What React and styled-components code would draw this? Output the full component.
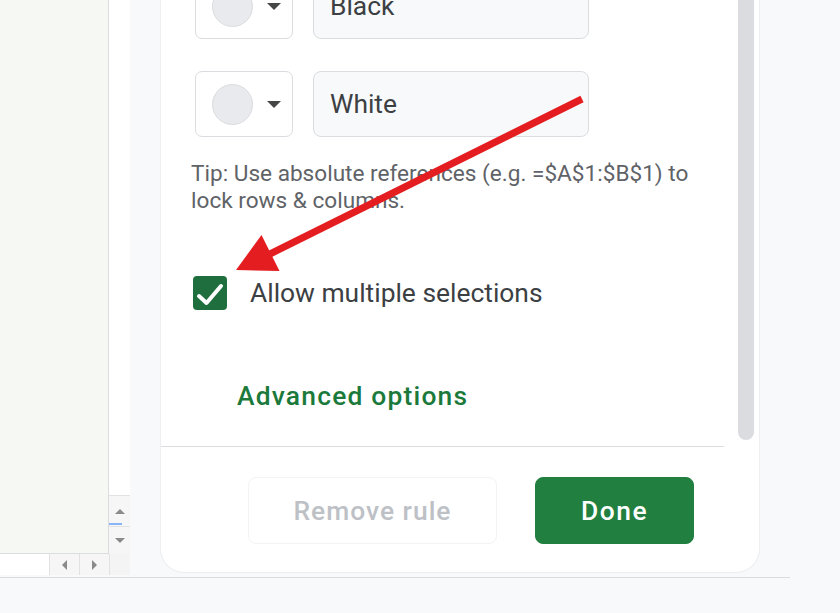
import React from 'react'
import styled, { createGlobalStyle } from 'styled-components'

// Global
const GlobalStyle = createGlobalStyle`
    html, body {
        margin: 0;
        padding: 0;
        overflow: hidden;
        background: #f8f9fa;
    }
    * {
        box-sizing: border-box;
    }
`

// Styled components
const Page = styled.div`
    position: relative;
    width: 840px;
    height: 613px;
    display: flex;
    flex-direction: column;
    background-color: #f8f9fa;
    font-family: Roboto, 'Noto Sans', Arial, sans-serif;
    overflow: hidden;
`
const Top = styled.div`
    height: 577px;
    display: flex;
    flex-direction: row;
`
const BottomLine = styled.div`
    width: 790px;
    height: 1px;
    background-color: #dadce0;
`

// Spreadsheet strip on the left
const Sheet = styled.div`
    width: 130px;
    display: flex;
    flex-direction: column;
`
const SheetBody = styled.div`
    height: 554px;
    display: flex;
    flex-direction: row;
`
const Grid = styled.div`
    width: 109px;
    background-color: #f6f8f4;
    border-right: 1px solid #dadce0;
    border-bottom: 1px solid #dadce0;
`
const VScroll = styled.div`
    flex: 1;
    display: flex;
    flex-direction: column;
    justify-content: flex-end;
    background-color: #ffffff;
`
const ScrollBtn = styled.div`
    position: relative;
    width: ${(props) => props.w || '100%'};
    height: ${(props) => props.h || '100%'};
    display: flex;
    align-items: center;
    justify-content: center;
    background-color: #f6f6f6;
    border-top: ${(props) => (props.top ? '1px solid #e2e2e2' : 'none')};
    border-left: ${(props) => (props.left ? '1px solid #e2e2e2' : 'none')};
`
const ScrollMark = styled.div`
    position: absolute;
    left: 0;
    bottom: 1px;
    width: 13px;
    height: 2px;
    background-color: #8ab4f8;
`
const HScrollRow = styled.div`
    height: 21px;
    display: flex;
    flex-direction: row;
`
const HTrack = styled.div`
    width: 49px;
    background-color: #ffffff;
`
const Corner = styled.div`
    flex: 1;
    background-color: #f4f4f4;
    border-left: 1px solid #e2e2e2;
`

// Side panel
const Side = styled.div`
    flex: 1;
    padding-left: 30px;
    padding-bottom: 4px;
    display: flex;
`
const Panel = styled.div`
    width: 600px;
    height: 100%;
    background-color: #ffffff;
    border-left: 1px solid #eceef0;
    border-right: 1px solid #eceef0;
    border-bottom: 1px solid #eceef0;
    border-radius: 0 0 24px 24px;
    display: flex;
    flex-direction: column;
    overflow: hidden;
`
const Body = styled.div`
    height: 447px;
    display: flex;
    flex-direction: row;
`
const Content = styled.div`
    width: 563px;
    height: 100%;
    border-bottom: 1px solid #dadce0;
    padding-left: 30px;
    display: flex;
    flex-direction: column;
    overflow: hidden;
`
const Track = styled.div`
    width: 16px;
    margin-left: 14px;
    padding-bottom: 7px;
    display: flex;
`
const Thumb = styled.div`
    flex: 1;
    background-color: #dadce0;
    border-radius: 0 0 8px 8px;
`

// Colour rows
const ColorRows = styled.div`
    margin-top: -27px;
    display: flex;
    flex-direction: column;
    gap: 32px;
`
const ColorRow = styled.div`
    display: flex;
    flex-direction: row;
    gap: 20px;
    height: 66px;
    padding-left: 4px;
`
const Swatch = styled.div`
    width: 98px;
    height: 66px;
    border: 1px solid #dadce0;
    border-radius: 7px;
    display: flex;
    align-items: center;
    padding-left: 16px;
    gap: 14px;
`
const Dot = styled.div`
    width: 41px;
    height: 41px;
    border-radius: 50%;
    background-color: ${(props) => props.color};
    border: 1px solid #dadce0;
`
const Caret = styled.div`
    width: 0;
    height: 0;
    border-left: 7.5px solid transparent;
    border-right: 7.5px solid transparent;
    border-top: 7px solid #444746;
`
const TextBox = styled.div`
    width: 276px;
    height: 66px;
    background-color: #f8f9fa;
    border: 1px solid #dadce0;
    border-radius: 8px;
    display: flex;
    align-items: center;
    padding-left: 16px;
    font-size: 26.4px;
    color: #3c4043;
`

// Tip and options
const Tip = styled.div`
    margin-top: 24px;
    font-size: 22.6px;
    line-height: 26.5px;
    color: #5f6368;
    width: 515px;
`
const CheckRow = styled.label`
    margin-top: 62px;
    display: flex;
    align-items: center;
    gap: 23px;
    padding-left: 2px;
    font-size: 26.4px;
    color: #3c4043;
`
const CheckBox = styled.div`
    width: 34px;
    height: 34px;
    border-radius: 4px;
    background-color: #1e6f3d;
    display: flex;
    align-items: center;
    justify-content: center;
`
const AdvancedLink = styled.div`
    margin-top: 71px;
    margin-left: 46px;
    font-size: 26.4px;
    line-height: 30px;
    font-weight: 500;
    letter-spacing: 1.2px;
    color: #1b7a3b;
`

// Footer
const Footer = styled.div`
    flex: 1;
    display: flex;
    justify-content: flex-end;
    align-items: flex-start;
    gap: 38px;
    padding-top: 30px;
    padding-right: 65px;
`
const Button = styled.div`
    width: ${(props) => props.w}px;
    height: 67px;
    border-radius: 8px;
    display: flex;
    align-items: center;
    justify-content: center;
    font-size: 26.4px;
    font-weight: 500;
    letter-spacing: ${(props) => (props.primary ? '1.5px' : '1px')};
    color: ${(props) => (props.primary ? '#ffffff' : '#bdc1c6')};
    background-color: ${(props) => (props.primary ? '#218040' : '#ffffff')};
    border: 1px solid ${(props) => (props.primary ? '#218040' : '#f1f3f4')};
`

// Annotation arrow over the page
const Overlay = styled.svg`
    position: absolute;
    left: 0;
    top: 0;
    pointer-events: none;
`

const Tri = ({ dir }) => {
    const pts = {
        up: '0,5 5,0 10,5',
        down: '0,0 10,0 5,5',
        left: '5,0 5,10 0,5',
        right: '0,0 0,10 5,5',
    }
    const horizontal = dir === 'left' || dir === 'right'
    return (
        <svg width={horizontal ? 5 : 10} height={horizontal ? 10 : 5}>
            <polygon points={pts[dir]} fill="#8a8a8a" />
        </svg>
    )
}

const App = () => {
    return (
        <Page>
            <GlobalStyle />
            <Top>
                <Sheet>
                    <SheetBody>
                        <Grid />
                        <VScroll>
                            <ScrollBtn h="31px" top>
                                <Tri dir="up" />
                                <ScrollMark />
                            </ScrollBtn>
                            <ScrollBtn h="28px" top>
                                <Tri dir="down" />
                            </ScrollBtn>
                        </VScroll>
                    </SheetBody>
                    <HScrollRow>
                        <HTrack />
                        <ScrollBtn w="30px" left>
                            <Tri dir="left" />
                        </ScrollBtn>
                        <ScrollBtn w="30px" left>
                            <Tri dir="right" />
                        </ScrollBtn>
                        <Corner />
                    </HScrollRow>
                </Sheet>
                <Side>
                    <Panel>
                        <Body>
                            <Content>
                                <ColorRows>
                                    <ColorRow>
                                        <Swatch>
                                            <Dot color="#e8eaed" />
                                            <Caret />
                                        </Swatch>
                                        <TextBox>Black</TextBox>
                                    </ColorRow>
                                    <ColorRow>
                                        <Swatch>
                                            <Dot color="#e8eaed" />
                                            <Caret />
                                        </Swatch>
                                        <TextBox>White</TextBox>
                                    </ColorRow>
                                </ColorRows>
                                <Tip>
                                    Tip: Use absolute references (e.g. =$A$1:$B$1) to lock rows &amp; columns.
                                </Tip>
                                <CheckRow>
                                    <CheckBox>
                                        <svg width="34" height="34" viewBox="0 0 34 34">
                                            <polyline
                                                points="6,20 13.5,27 28,10"
                                                fill="none"
                                                stroke="#ffffff"
                                                strokeWidth="4"
                                                strokeLinecap="round"
                                                strokeLinejoin="round"
                                            />
                                        </svg>
                                    </CheckBox>
                                    Allow multiple selections
                                </CheckRow>
                                <AdvancedLink>Advanced options</AdvancedLink>
                            </Content>
                            <Track>
                                <Thumb />
                            </Track>
                        </Body>
                        <Footer>
                            <Button w={249}>Remove rule</Button>
                            <Button w={159} primary>
                                Done
                            </Button>
                        </Footer>
                    </Panel>
                </Side>
            </Top>
            <BottomLine />
            <Overlay width="840" height="613" viewBox="0 0 840 613">
                <line x1="582" y1="99" x2="268" y2="255" stroke="#e41e20" strokeWidth="7" />
                <polygon points="236,270 279.5,271 261.5,235" fill="#e41e20" />
            </Overlay>
        </Page>
    )
}

export default App
